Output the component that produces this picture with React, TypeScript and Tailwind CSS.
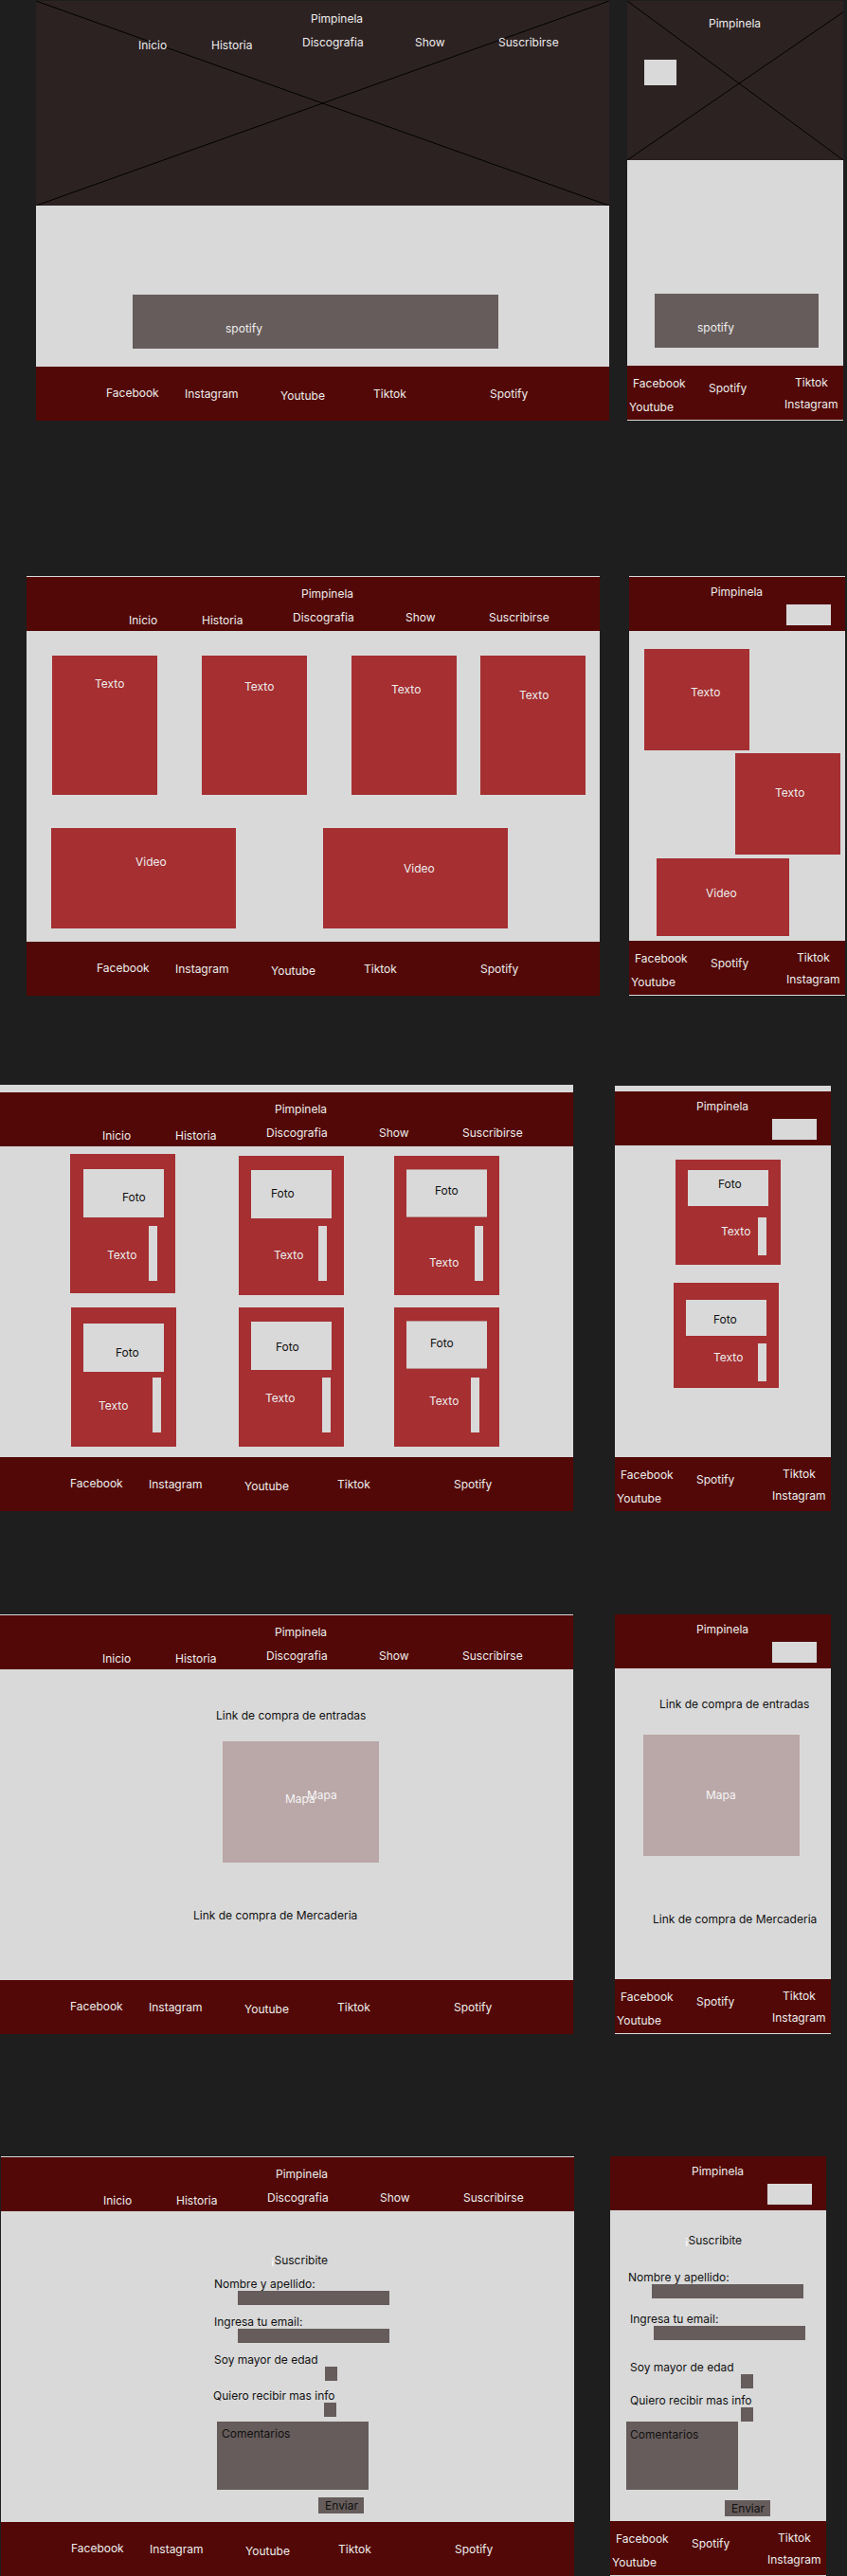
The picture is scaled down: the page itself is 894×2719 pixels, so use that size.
import React from "react";

const RED = "bg-[#a52f31]";
const DARKRED = "bg-[#520806]";
const GRAY = "bg-[#d9d9d9]";
const BOX = "bg-[#665c5b]";

function Cross({ second }: { second: string }) {
    // placeholder image cross
    return (
        <svg className="absolute inset-0 h-full w-full" viewBox="0 0 100 100" preserveAspectRatio="none">
            <line x1="0" y1="0" x2="100" y2="100" stroke="#000" strokeWidth="1" vectorEffect="non-scaling-stroke" />
            <line x1="100" y1={second} x2="0" y2="100" stroke="#000" strokeWidth="1" vectorEffect="non-scaling-stroke" />
        </svg>
    );
}

function DeskNav() {
    return (
        <div className="relative">
            <div className="pl-[290px]">Pimpinela</div>
            <div className="mt-[9px] flex items-start pl-[108px]">
                <span className="mt-[3px] w-[77px]">Inicio</span>
                <span className="mt-[3px] w-[96px]">Historia</span>
                <span className="w-[119px]">Discografia</span>
                <span className="w-[88px]">Show</span>
                <span>Suscribirse</span>
            </div>
        </div>
    );
}

function DeskHeader() {
    return (
        <div className={`h-[57px] ${DARKRED} pt-[10px] text-[#ededed]`}>
            <DeskNav />
        </div>
    );
}

function DeskFooter() {
    return (
        <div className={`h-[57px] ${DARKRED} flex items-start pl-[74px] pt-[20px] text-[#ededed]`}>
            <span className="w-[83px]">Facebook</span>
            <span className="mt-[1px] w-[101px]">Instagram</span>
            <span className="mt-[3px] w-[98px]">Youtube</span>
            <span className="mt-[1px] w-[123px]">Tiktok</span>
            <span className="mt-[1px]">Spotify</span>
        </div>
    );
}

function MobHeader() {
    return (
        <div className={`h-[57px] ${DARKRED} pt-[8px] text-[#ededed]`}>
            <div className="pl-[86px]">Pimpinela</div>
            <div className={`ml-[166px] mt-[5px] h-[22px] w-[47px] ${GRAY}`} />
        </div>
    );
}

function MobFooter({ line }: { line?: boolean }) {
    return (
        <>
            <div className={`h-[57px] ${DARKRED} pt-[10px] text-[#ededed]`}>
                <div className="flex items-start">
                    <span className="ml-[6px] mt-[1px] w-[80px]">Facebook</span>
                    <span className="mt-[6px] w-[91px]">Spotify</span>
                    <span>Tiktok</span>
                </div>
                <div className="mt-[1px] flex items-start">
                    <span className="ml-[2px] mt-[3px] w-[164px]">Youtube</span>
                    <span>Instagram</span>
                </div>
            </div>
            {line && <div className={`h-px ${GRAY}`} />}
        </>
    );
}

function TopLine() {
    return <div className={`h-px ${GRAY}`} />;
}

type FotoProps = {
    className: string;
    box: string;
    foto: string;
    texto: string;
    bar: string;
    border?: boolean;
};

function FotoCard({ className, box, foto, texto, bar, border }: FotoProps) {
    return (
        <div className={`${RED} flex w-[111px] shrink-0 flex-col ${className}`}>
            <div className={`${GRAY} w-[85px] shrink-0 text-[#111] ${box} ${border ? "border-y border-[#b88f8f]" : ""}`}>
                <div className={foto}>Foto</div>
            </div>
            <div className="flex items-start">
                <span className={`shrink-0 text-[#ededed] ${texto}`}>Texto</span>
                <div className={`${GRAY} w-[9px] shrink-0 ${bar}`} />
            </div>
        </div>
    );
}

function Frame1() {
    return (
        <div className="mt-[1px] flex items-start">
            <div className="ml-[38px] w-[605px] shrink-0">
                <div className="relative h-[216px] bg-[#2d2222] pt-[11px] text-[#ededed]">
                    <Cross second="0" />
                    <DeskNav />
                </div>
                <div className={`h-[170px] ${GRAY} pt-[94px]`}>
                    <div className={`ml-[102px] h-[57px] w-[386px] ${BOX} pl-[98px] pt-[28px] text-[#ededed]`}>spotify</div>
                </div>
                <DeskFooter />
            </div>
            <div className="ml-[19px] w-[228px] shrink-0">
                <div className="relative h-[168px] bg-[#2d2222] pt-[16px] text-[#ededed]">
                    <Cross second="7" />
                    <div className="relative pl-[86px]">Pimpinela</div>
                    <div className={`relative ml-[18px] mt-[30px] h-[27px] w-[34px] ${GRAY}`} />
                </div>
                <div className={`h-[217px] ${GRAY} pt-[141px]`}>
                    <div className={`ml-[29px] h-[57px] w-[173px] ${BOX} pl-[45px] pt-[28px] text-[#ededed]`}>spotify</div>
                </div>
                <MobFooter line />
            </div>
        </div>
    );
}

function Frame2() {
    const card = `${RED} h-[147px] w-[111px] shrink-0 text-[#ededed]`;
    const video = `${RED} h-[106px] w-[195px] shrink-0 text-[#ededed]`;
    return (
        <div className="mt-[164px] flex items-start">
            <div className="ml-[28px] w-[605px] shrink-0">
                <TopLine />
                <DeskHeader />
                <div className={`h-[328px] ${GRAY} pt-[26px]`}>
                    <div className="flex items-start">
                        <div className={`${card} ml-[27px] pl-[45px] pt-[22px]`}>Texto</div>
                        <div className={`${card} ml-[47px] pl-[45px] pt-[25px]`}>Texto</div>
                        <div className={`${card} ml-[47px] pl-[42px] pt-[28px]`}>Texto</div>
                        <div className={`${card} ml-[25px] pl-[41px] pt-[34px]`}>Texto</div>
                    </div>
                    <div className="mt-[35px] flex items-start">
                        <div className={`${video} ml-[26px] pl-[89px] pt-[28px]`}>Video</div>
                        <div className={`${video} ml-[92px] pl-[85px] pt-[35px]`}>Video</div>
                    </div>
                </div>
                <DeskFooter />
            </div>
            <div className="ml-[31px] w-[228px] shrink-0">
                <TopLine />
                <MobHeader />
                <div className={`h-[327px] ${GRAY} pt-[19px] text-[#ededed]`}>
                    <div className={`${RED} ml-[16px] h-[107px] w-[111px] pl-[49px] pt-[38px]`}>Texto</div>
                    <div className={`${RED} ml-[112px] mt-[3px] h-[107px] w-[111px] pl-[42px] pt-[34px]`}>Texto</div>
                    <div className={`${RED} ml-[29px] mt-[4px] h-[82px] w-[140px] pl-[52px] pt-[29px]`}>Video</div>
                </div>
                <MobFooter line />
            </div>
        </div>
    );
}

function Frame3() {
    return (
        <div className="mt-[94px] flex items-start">
            <div className="w-[605px] shrink-0">
                <div className={`h-[8px] ${GRAY}`} />
                <DeskHeader />
                <div className={`h-[328px] ${GRAY} pt-[8px]`}>
                    <div className="flex items-start">
                        <FotoCard className="ml-[74px] h-[147px]" box="ml-[14px] mt-[16px] h-[51px]" foto="pl-[41px] pt-[22px]" texto="ml-[39px] mt-[32px] w-[44px]" bar="mt-[9px] h-[58px]" />
                        <FotoCard className="ml-[67px] mt-[2px] h-[147px]" box="ml-[13px] mt-[15px] h-[51px]" foto="pl-[21px] pt-[17px]" texto="ml-[37px] mt-[31px] w-[47px]" bar="mt-[8px] h-[58px]" />
                        <FotoCard className="ml-[53px] mt-[2px] h-[147px]" box="ml-[13px] mt-[14px] h-[51px]" foto="pl-[30px] pt-[14px]" texto="ml-[37px] mt-[40px] w-[48px]" bar="mt-[9px] h-[58px]" border />
                    </div>
                    <div className="mt-[13px] flex items-start">
                        <FotoCard className="ml-[75px] h-[147px]" box="ml-[13px] mt-[17px] h-[51px]" foto="pl-[34px] pt-[23px]" texto="ml-[29px] mt-[28px] w-[57px]" bar="mt-[6px] h-[58px]" />
                        <FotoCard className="ml-[66px] h-[147px]" box="ml-[13px] mt-[15px] h-[51px]" foto="pl-[26px] pt-[19px]" texto="ml-[28px] mt-[22px] w-[60px]" bar="mt-[8px] h-[58px]" />
                        <FotoCard className="ml-[53px] h-[147px]" box="ml-[13px] mt-[14px] h-[51px]" foto="pl-[25px] pt-[15px]" texto="ml-[37px] mt-[26px] w-[44px]" bar="mt-[9px] h-[58px]" border />
                    </div>
                </div>
                <DeskFooter />
            </div>
            <div className="ml-[44px] mt-[1px] w-[228px] shrink-0">
                <div className={`h-[6px] ${GRAY}`} />
                <MobHeader />
                <div className={`h-[329px] ${GRAY} pt-[15px]`}>
                    <FotoCard className="ml-[64px] h-[111px]" box="ml-[13px] mt-[11px] h-[38px]" foto="pl-[32px] pt-[7px]" texto="ml-[48px] mt-[19px] w-[39px]" bar="mt-[12px] h-[40px]" />
                    <FotoCard className="ml-[62px] mt-[19px] h-[111px]" box="ml-[13px] mt-[18px] h-[38px]" foto="pl-[29px] pt-[13px]" texto="ml-[42px] mt-[15px] w-[47px]" bar="mt-[8px] h-[40px]" />
                </div>
                <MobFooter />
            </div>
        </div>
    );
}

function Frame4() {
    const map = "h-[128px] w-[165px] bg-[#baa7a7] text-[#f5f5f5]";
    return (
        <div className="mt-[109px] flex items-start">
            <div className="w-[605px] shrink-0">
                <TopLine />
                <DeskHeader />
                <div className={`h-[328px] ${GRAY} pt-[41px] text-[#111]`}>
                    <div className="pl-[228px]">Link de compra de entradas</div>
                    <div className={`${map} ml-[235px] mt-[19px] flex items-start pl-[66px]`}>
                        <span className="mt-[53px] w-[23px] shrink-0 whitespace-nowrap">Mapa</span>
                        <span className="mt-[49px] whitespace-nowrap">Mapa</span>
                    </div>
                    <div className="mt-[48px] pl-[204px]">Link de compra de Mercaderia</div>
                </div>
                <DeskFooter />
            </div>
            <div className="ml-[44px] w-[228px] shrink-0">
                <MobHeader />
                <div className={`h-[328px] ${GRAY} pt-[30px] text-[#111]`}>
                    <div className="pl-[47px]">Link de compra de entradas</div>
                    <div className={`${map} ml-[30px] mt-[24px] pl-[66px] pt-[56px]`}>Mapa</div>
                    <div className="mt-[59px] whitespace-nowrap pl-[40px]">Link de compra de Mercaderia</div>
                </div>
                <MobFooter line />
            </div>
        </div>
    );
}

function Frame5() {
    const input = `h-[15px] w-[160px] ${BOX}`;
    const check = `h-[15px] w-[13px] ${BOX}`;
    const send = `h-[17px] w-[48px] ${BOX} pl-[7px] leading-[17px]`;
    return (
        <div className="mt-[129px] flex items-start">
            <div className="ml-[1px] w-[605px] shrink-0">
                <TopLine />
                <DeskHeader />
                <div className={`h-[328px] ${GRAY} pt-[44px] text-[#111]`}>
                    <div className="pl-[285px]"><span className="text-white">¡</span>Suscribite</div>
                    <div className="mt-[9px] pl-[225px]">Nombre y apellido:</div>
                    <div className={`${input} -mt-px ml-[250px]`} />
                    <div className="mt-[10px] pl-[225px]">Ingresa tu email:</div>
                    <div className={`${input} -mt-px ml-[250px]`} />
                    <div className="mt-[10px] pl-[225px]">Soy mayor de edad</div>
                    <div className={`${check} -mt-px ml-[342px]`} />
                    <div className="mt-[8px] pl-[224px]">Quiero recibir mas info</div>
                    <div className={`${check} -mt-px ml-[341px]`} />
                    <div className={`mt-[5px] ml-[228px] h-[72px] w-[160px] ${BOX} pl-[5px] pt-[5px]`}>Comentarios</div>
                    <div className={`${send} mt-[8px] ml-[335px]`}>Enviar</div>
                </div>
                <DeskFooter />
            </div>
            <div className="ml-[38px] w-[228px] shrink-0">
                <MobHeader />
                <div className={`h-[328px] ${GRAY} pt-[24px] text-[#111]`}>
                    <div className="pl-[79px]"><span className="text-white">¡</span>Suscribite</div>
                    <div className="mt-[23px] pl-[19px]">Nombre y apellido:</div>
                    <div className={`${input} -mt-px ml-[44px]`} />
                    <div className="mt-[14px] pl-[21px]">Ingresa tu email:</div>
                    <div className={`${input} -mt-px ml-[46px]`} />
                    <div className="mt-[21px] pl-[21px]">Soy mayor de edad</div>
                    <div className={`${check} -mt-px ml-[138px]`} />
                    <div className="mt-[5px] pl-[21px]">Quiero recibir mas info</div>
                    <div className={`${check} -mt-px ml-[138px]`} />
                    <div className={`ml-[17px] h-[72px] w-[118px] ${BOX} pl-[4px] pt-[6px]`}>Comentarios</div>
                    <div className={`${send} mt-[11px] ml-[121px]`}>Enviar</div>
                </div>
                <MobFooter line />
            </div>
        </div>
    );
}

export default function App() {
    return (
        <div className="h-[2719px] w-[894px] overflow-hidden bg-[#1e1e1e] font-['Inter','Noto_Sans',sans-serif] text-[12px] leading-4">
            <Frame1 />
            <Frame2 />
            <Frame3 />
            <Frame4 />
            <Frame5 />
        </div>
    );
}
